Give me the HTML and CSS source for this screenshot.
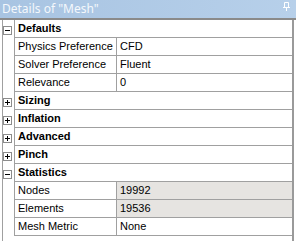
FILE: index.html
```html
<!DOCTYPE html>
<html lang="en">
<head>
  <meta charset="UTF-8" />
  <title>Details of "Mesh"</title>
  <link rel="stylesheet" href="styles.css">
</head>
<body>

<div class="panel">
  <div class="title">
    <span>Details of "Mesh"</span>
    <svg class="pin" width="7" height="9" viewBox="0 0 7 9">
      <path d="M1.5 0.5h4v5h-4z M0 5.5h7 M3.5 5.5v3.5" fill="none" stroke="#fff" stroke-width="1"/>
    </svg>
  </div>

  <div class="grid">
    <div class="row cat"><div class="gutter"><span class="box open"></span></div><div class="cells"><div class="label">Defaults</div></div></div>
    <div class="row"><div class="gutter"></div><div class="cells"><div class="name">Physics Preference</div><div class="value">CFD</div></div></div>
    <div class="row"><div class="gutter"></div><div class="cells"><div class="name">Solver Preference</div><div class="value">Fluent</div></div></div>
    <div class="row"><div class="gutter"></div><div class="cells"><div class="name">Relevance</div><div class="value">0</div></div></div>
    <div class="row cat"><div class="gutter"><span class="box"></span></div><div class="cells"><div class="label">Sizing</div></div></div>
    <div class="row cat"><div class="gutter"><span class="box"></span></div><div class="cells"><div class="label">Inflation</div></div></div>
    <div class="row cat"><div class="gutter"><span class="box"></span></div><div class="cells"><div class="label">Advanced</div></div></div>
    <div class="row cat"><div class="gutter"><span class="box"></span></div><div class="cells"><div class="label">Pinch</div></div></div>
    <div class="row cat"><div class="gutter"><span class="box open"></span></div><div class="cells"><div class="label">Statistics</div></div></div>
    <div class="row"><div class="gutter"></div><div class="cells"><div class="name">Nodes</div><div class="value ro">19992</div></div></div>
    <div class="row"><div class="gutter"></div><div class="cells"><div class="name">Elements</div><div class="value ro">19536</div></div></div>
    <div class="row"><div class="gutter"></div><div class="cells"><div class="name">Mesh Metric</div><div class="value">None</div></div></div>
  </div>
</div>

</body>
</html>
```

FILE: styles.css
```css
body { margin: 0; background: #fff; font-family: 'Liberation Sans', Arial, sans-serif; font-size: 11px; color: #000; }
.panel { width: 296px; height: 241px; overflow: hidden; }
.title { height: 18px; line-height: 18px; padding-left: 2px; color: #f4f8fc; font-family: 'Noto Sans', sans-serif; font-size: 12px; background: linear-gradient(to right, #a8c4e2, #b7d0ea); border-bottom: 2px solid #8a8a8a; display: flex; justify-content: space-between; align-items: center; }
.pin { margin-right: 6px; margin-top: -5px; }
.grid { margin-left: 2px; width: 289px; height: 221px; border-left: 1px solid #a0a0a0; border-right: 2px solid #9a9a9a; }
.row { display: flex; height: 18px; }
.gutter { width: 11px; flex: none; position: relative; }
.cells { flex: 1; display: flex; border-left: 1px solid #a0a0a0; border-bottom: 1px solid #a0a0a0; line-height: 17px; white-space: nowrap; }
.label { padding-left: 3px; font-weight: bold; }
.name { width: 98px; flex: none; padding-left: 3px; border-right: 1px solid #a0a0a0; }
.value { flex: 1; padding-left: 3px; }
.value.ro { background: #e6e4e1; }
.box { position: absolute; left: 0; top: 6px; width: 7px; height: 7px; border: 1px solid #8c8c8c; }
.box::before { content: ""; position: absolute; left: 1px; top: 3px; width: 5px; height: 1px; background: #000; }
.box::after { content: ""; position: absolute; left: 3px; top: 1px; width: 1px; height: 5px; background: #000; }
.box.open::after { display: none; }
```
